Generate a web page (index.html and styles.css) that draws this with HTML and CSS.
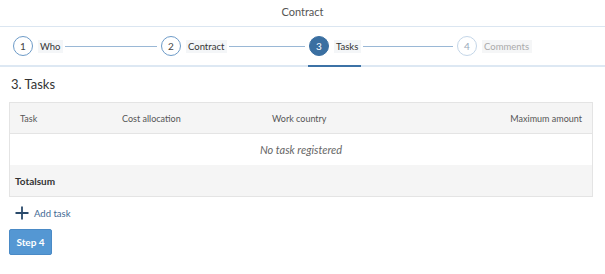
FILE: index.html
```html
<!DOCTYPE html>
<html>
<head>
<meta charset="utf-8">
<link rel="stylesheet" href="styles.css">
</head>
<body>
<div class="page">
  <header class="topbar">Contract</header>
  <nav class="steps">
    <div class="step done">
      <span class="circle">1</span><span class="label">Who</span><span class="line"></span>
    </div>
    <div class="step done">
      <span class="circle">2</span><span class="label">Contract</span><span class="line"></span>
    </div>
    <div class="step current">
      <span class="circle">3</span><span class="label">Tasks</span><span class="line"></span>
    </div>
    <div class="step disabled">
      <span class="circle">4</span><span class="label">Comments</span>
    </div>
  </nav>
  <main class="content">
    <h2 class="title">3. Tasks</h2>
    <div class="table">
      <div class="row head">
        <div class="c1">Task</div>
        <div class="c2">Cost allocation</div>
        <div class="c3">Work country</div>
        <div class="c4">Maximum amount</div>
      </div>
      <div class="row empty">No task registered</div>
      <div class="row total">Totalsum</div>
    </div>
    <div class="add">
      <svg width="14" height="14" viewBox="0 0 14 14"><path d="M7 0.5V13.5M0.5 7H13.5" stroke="#2a4a6b" stroke-width="1.8" fill="none"/></svg>
      <span>Add task</span>
    </div>
    <button class="btn">Step 4</button>
  </main>
</div>
</body>
</html>
```
FILE: styles.css
```css
* { box-sizing: border-box; }
html, body { margin: 0; padding: 0; background: #fff; }
body { font-family: Lato, "Liberation Sans", sans-serif; color: #333; font-size: 10px; }
.page { width: 605px; height: 274px; overflow: hidden; }
.topbar {
  height: 27px; display: flex; align-items: center; justify-content: center;
  font-size: 11px; color: #555; border-bottom: 1px solid #dbe6f1; padding-bottom: 4px;
}
.steps {
  height: 40px; display: flex; padding-left: 13px; border-bottom: 2px solid #dde8f3;
  align-items: center;
}
.step { width: 148px; display: flex; align-items: center; height: 100%; position: relative; }
.step.current::after {
  content: ""; position: absolute; left: -1px; width: 53px; bottom: -2px; height: 2px; background: #3c72a6;
}
.circle {
  width: 20px; height: 20px; border-radius: 50%; border: 1px solid #6d9bc8; flex: none;
  display: flex; align-items: center; justify-content: center; font-size: 10px; color: #444; background: #fff;
}
.label { margin-left: 5px; padding: 1px 3px 1px 2px; background: #f4f6f8; color: #333; font-size: 9.5px; }
.line { flex: 1; height: 1px; background: #9ab8d6; margin: 0 4px 0 2px; }
.current .circle { background: #3a6fa1; border-color: #3a6fa1; color: #fff; }
.current .label { background: #f4f6f8; }
.disabled .circle { border-color: #c4d6e8; color: #9ab; }
.disabled .label { color: #aaa; background: #f5f6f7; }
.content { padding: 0 12px 0 9px; }
.title { margin: 8px 0 0 2px; font-weight: normal; font-size: 13px; color: #333; height: 27px; line-height: 18px; }
.table { border: 1px solid #e4e4e4; width: 584px; }
.row { height: 31px; display: flex; align-items: center; }
.head { background: #f5f5f5; border-bottom: 1px solid #e4e4e4; color: #555; padding: 0 10px; font-size: 9px; }
.head .c1 { width: 102px; }
.head .c2 { width: 150px; }
.head .c3 { flex: 1; }
.head .c4 { text-align: right; }
.empty { justify-content: center; font-style: italic; color: #666; background: #fff; font-size: 11px; }
.total { background: #f5f5f5; font-weight: bold; padding-left: 5px; color: #333; }
.add { display: flex; align-items: center; margin: 9px 0 0 6px; height: 14px; gap: 5px; color: #3f6a94; font-size: 9.5px; }
.btn {
  margin-top: 9px; width: 43px; height: 26px; background: #5497d3; border: 1px solid #4a8ac6; border-radius: 2px;
  color: #fff; font-family: inherit; font-size: 10px; font-weight: bold; padding: 0;
}
```
